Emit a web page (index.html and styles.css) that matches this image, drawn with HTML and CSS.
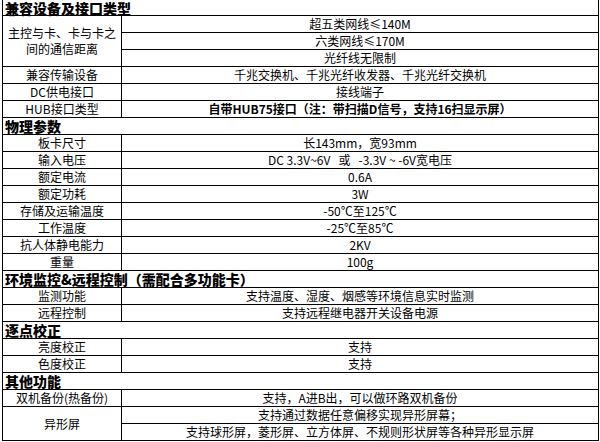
FILE: index.html
```html
<!DOCTYPE html>
<html lang="zh">
<head>
<meta charset="utf-8">
<title>规格参数</title>
<link rel="stylesheet" href="styles.css">
</head>
<body>
<table class="spec">
  <colgroup><col class="c-name"><col class="c-val"></colgroup>
  <tr><td class="sec first" colspan="2">兼容设备及接口类型</td></tr>
  <tr><td class="name two" rowspan="3">主控与卡、卡与卡之<br>间的通信距离</td><td>超五类网线≤140M</td></tr>
  <tr><td>六类网线≤170M</td></tr>
  <tr><td>光纤线无限制</td></tr>
  <tr><td class="name">兼容传输设备</td><td>千兆交换机、千兆光纤收发器、千兆光纤交换机</td></tr>
  <tr><td class="name">DC供电接口</td><td>接线端子</td></tr>
  <tr><td class="name">HUB接口类型</td><td class="b">自带HUB75接口（注：带扫描D信号，支持16扫显示屏）</td></tr>
  <tr><td class="sec" colspan="2">物理参数</td></tr>
  <tr><td class="name">板卡尺寸</td><td>长143mm，宽93mm</td></tr>
  <tr><td class="name">输入电压</td><td class="pre">DC 3.3V~6V   或   -3.3V ~ -6V宽电压</td></tr>
  <tr><td class="name">额定电流</td><td>0.6A</td></tr>
  <tr><td class="name">额定功耗</td><td>3W</td></tr>
  <tr><td class="name">存储及运输温度</td><td>-50℃至125℃</td></tr>
  <tr><td class="name">工作温度</td><td>-25℃至85℃</td></tr>
  <tr><td class="name">抗人体静电能力</td><td>2KV</td></tr>
  <tr><td class="name">重量</td><td>100g</td></tr>
  <tr><td class="sec" colspan="2">环境监控&amp;远程控制（需配合多功能卡）</td></tr>
  <tr><td class="name">监测功能</td><td>支持温度、湿度、烟感等环境信息实时监测</td></tr>
  <tr><td class="name">远程控制</td><td>支持远程继电器开关设备电源</td></tr>
  <tr><td class="sec" colspan="2">逐点校正</td></tr>
  <tr><td class="name">亮度校正</td><td>支持</td></tr>
  <tr><td class="name">色度校正</td><td>支持</td></tr>
  <tr><td class="sec" colspan="2">其他功能</td></tr>
  <tr><td class="name">双机备份(热备份)</td><td>支持，A进B出，可以做环路双机备份</td></tr>
  <tr><td class="name" rowspan="2">异形屏</td><td>支持通过数据任意偏移实现异形屏幕；</td></tr>
  <tr><td>支持球形屏，菱形屏、立方体屏、不规则形状屏等各种异形显示屏</td></tr>
</table>
</body>
</html>
```
FILE: styles.css
```css
html, body {
  margin: 0;
  padding: 0;
  background: #fff;
}
body {
  font-family: "Noto Sans CJK SC", "Noto Sans", sans-serif;
  font-size: 12px;
  color: #000;
}
.spec {
  border-collapse: collapse;
  table-layout: fixed;
  width: 596px;
  margin: -2px 0 0 2px;
}
.c-name { width: 119px; }
.c-val { width: 477px; }
.spec td {
  border: 1px solid #000;
  padding: 0;
  height: 16px;
  line-height: 16px;
  text-align: center;
  vertical-align: middle;
  white-space: nowrap;
}
.spec td.sec {
  text-align: left;
  font-weight: 900;
  font-size: 14px;
  line-height: 16px;
  padding-left: 2px;
}
.spec td.sec.first {
  height: 14px;
  line-height: 14px;
  padding-top: 2px;
}
.spec td.two {
  white-space: normal;
}
.spec td.b { font-weight: 700; }
.spec td.pre { white-space: pre; }
```
